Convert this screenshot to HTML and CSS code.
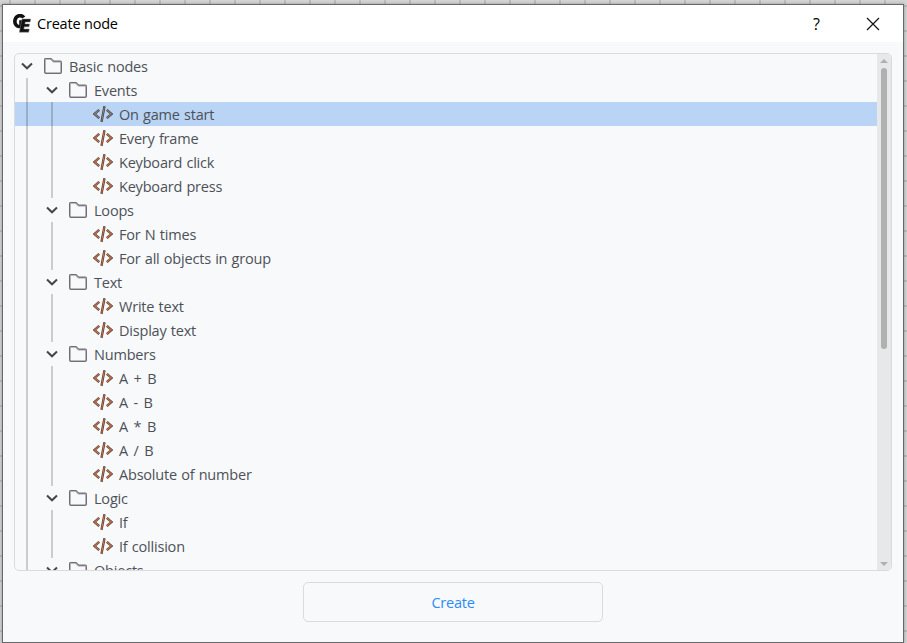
FILE: index.html
```html
<!DOCTYPE html>
<html lang="en">
<head>
<meta charset="utf-8">
<title>Create node</title>
<link rel="stylesheet" href="styles.css">
</head>
<body>
<svg class="defs" width="0" height="0" aria-hidden="true">
  <symbol id="chev" viewBox="0 0 12 8"><path d="M1 1.5 6 6.3l5-4.8" fill="none" stroke="#44474b" stroke-width="2"/></symbol>
  <symbol id="folder" viewBox="0 0 18 16"><path d="M.9 13.8V1.8Q.9.8 1.9.8H6.8L9.6 3.5H16.1Q17.1 3.5 17.1 4.5V14Q17.1 15.1 16 15.1H2Q.9 15.1.9 13.8Z" fill="none" stroke="#a6a6ab" stroke-width="1.8"/><path d="M.5 13.8V1.5Q.5.5 1.5.5H7L9.8 3.2H16.4Q17.5 3.2 17.5 4.3V14Q17.5 15.5 16.2 15.5H2Q.5 15.5.5 13.8Z" fill="none" stroke="#5f5f66" stroke-width=".8"/></symbol>
  <symbol id="code" viewBox="0 0 20 16"><g fill="none"><path class="edge" d="M6.2 3.8 1.5 8 6.2 12.2M13.8 3.8 18.5 8 13.8 12.2M11.5.3 8.5 15.7"/><path class="core" d="M6 4 1.6 8 6 12M14 4 18.4 8 14 12M11.3 1 8.7 15"/></g></symbol>
</svg>
<div class="window">
  <header class="titlebar">
    <svg class="logo" width="19" height="19" viewBox="0 0 19 19"><path d="M10.8 3.6C8.8.6 3.4.8 2.1 5.8 1 10.1 4.2 13.4 7.6 12.3l1-4.3H6.2" fill="none" stroke="#111" stroke-width="3.6"/><path d="M9 5h8.7l-.6 3h-4.8l-.4 2h4.6l-.5 2.8h-4.7l-.5 2.3h5.5l-.6 3.1H6.3Z" fill="#111" stroke="#888" stroke-width=".5"/></svg>
    <h1>Create node</h1>
    <span class="help">?</span>
    <svg class="close" width="14" height="14" viewBox="0 0 14 14"><path d="M1 1 13 13M13 1 1 13" stroke="#111" stroke-width="1.2"/></svg>
  </header>
  <main>
    <div class="panel">
      <div class="tree" id="tree"></div>
      <div class="scrollbar"><i class="up"></i><i class="thumb"></i><i class="down"></i></div>
    </div>
    <button class="create">Create</button>
  </main>
</div>
<script src="tree.js"></script>
</body>
</html>
```
FILE: tree.js
```js
const nodes = [
  [0, "Basic nodes"],
  [1, "Events"], [2, "On game start"], [2, "Every frame"], [2, "Keyboard click"], [2, "Keyboard press"],
  [1, "Loops"], [2, "For N times"], [2, "For all objects in group"],
  [1, "Text"], [2, "Write text"], [2, "Display text"],
  [1, "Numbers"], [2, "A + B"], [2, "A - B"], [2, "A * B"], [2, "A / B"], [2, "Absolute of number"],
  [1, "Logic"], [2, "If"], [2, "If collision"],
  [1, "Objects"]
];
document.getElementById("tree").innerHTML = nodes.map(([level, name]) => {
  const guides = '<span class="guide"></span>'.repeat(level);
  const leaf = level === 2;
  const toggle = `<span class="toggle">${leaf ? "" : '<svg width="12" height="8"><use href="#chev"/></svg>'}</span>`;
  const icon = leaf
    ? '<svg class="code" width="20" height="16"><use href="#code"/></svg>'
    : '<svg class="folder" width="18" height="16"><use href="#folder"/></svg>';
  const kind = (name === "On game start" ? " selected" : "") + (/^A . B$/.test(name) ? " formula" : "");
  return `<div class="row${kind}">${guides}${toggle}${icon}<span class="name">${name}</span></div>`;
}).join("");
```
FILE: styles.css
```css
* { box-sizing: border-box; }
body {
  margin: 0; width: 907px; height: 643px; overflow: hidden;
  padding: 4px 3px 0 2px;
  font-family: "Open Sans", "Noto Sans", sans-serif;
  background-color: #d4d4d4;
  background-image: linear-gradient(#b9bbbd 2px, transparent 2px), linear-gradient(90deg, #b9bbbd 2px, transparent 2px);
  background-size: 25px 25px;
  background-position: 9px 5px;
}
.defs { position: absolute; }
.window { width: 902px; height: 639px; border: 1px solid #66686a; background: #f8f9fb; box-shadow: 0 0 3px rgba(0,0,0,.3); }
.titlebar { height: 37px; background: #fff; display: flex; align-items: center; padding-left: 10px; }
h1 { margin: 0 0 0 5px; font-size: 14.5px; font-weight: 400; letter-spacing: -.2px; color: #000; flex: 1; }
.help { font-size: 16px; color: #000; margin-right: 46px; }
.close { margin-right: 23px; }
main { padding: 11px 11px 0; display: flex; flex-direction: column; align-items: center; }
.panel { width: 878px; height: 518px; border: 1px solid #d9dbdd; border-radius: 5px; overflow: hidden; display: flex; }
.tree { flex: 1; overflow: hidden; }
.row { display: flex; align-items: center; height: 24px; font-size: 14.5px; color: #4d5157; white-space: nowrap; }
.selected { background: #b9d4f5; }
.guide { width: 25px; height: 24px; flex: none; padding-left: 11px; }
.guide::before { content: ""; display: block; width: 2px; height: 100%; background: rgba(0,0,0,.18); }
.toggle { width: 25px; flex: none; padding-left: 6px; display: flex; }
.folder { margin: 0 7px 0 4px; flex: none; }
.code { margin: 0 6px 0 3px; flex: none; }
.edge { stroke: #50352b; stroke-width: 2.3; }
.core { stroke: #c5764d; stroke-width: 1.1; }
.selected .code { filter: grayscale(.9); }
.name { letter-spacing: -.2px; word-spacing: .7px; }
.formula .name { word-spacing: 2px; }
.scrollbar { width: 14px; background: #e7e8ea; display: flex; flex-direction: column; align-items: center; padding: 5px 0 4px; }
.up, .down { border: 4px solid transparent; border-top: 0; border-bottom: 4px solid #afb0b0; height: 4px; }
.down { transform: rotate(180deg); margin-top: auto; }
.thumb { width: 6px; height: 281px; border-radius: 3px; margin-top: 5px; background: #afb0b0; }
.create { width: 300px; height: 40px; margin-top: 11px; border: 1px solid #d9dbdd; border-radius: 5px; background: #f8f9fb; font: 14.5px "Open Sans", sans-serif; letter-spacing: -.25px; color: #2b8cf4; padding: 0; }
```
